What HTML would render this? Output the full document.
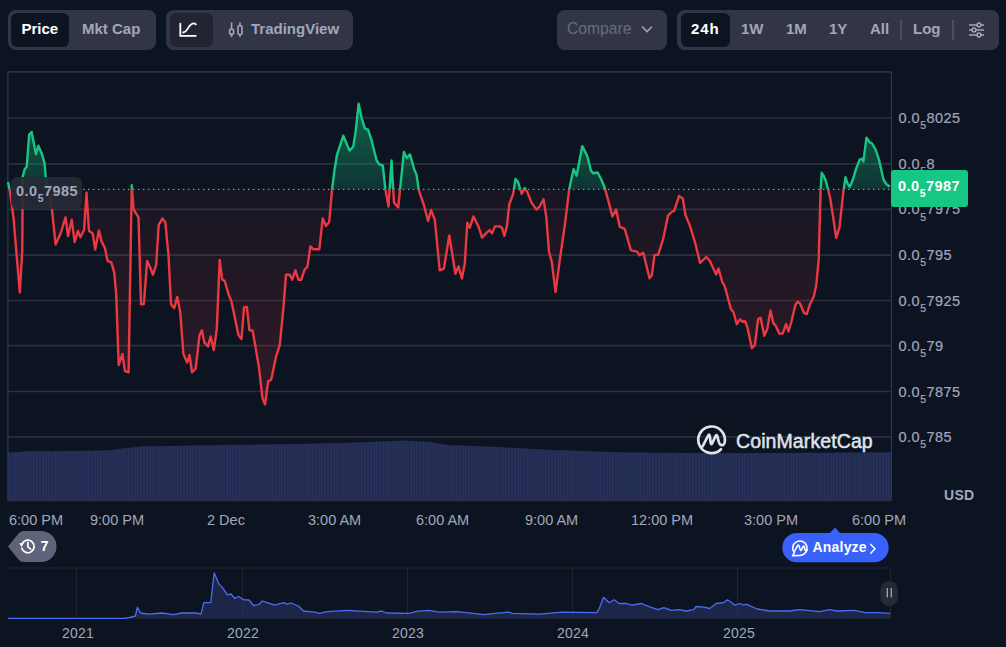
<!DOCTYPE html>
<html><head><meta charset="utf-8">
<style>
*{margin:0;padding:0;box-sizing:border-box}
html,body{width:1006px;height:647px;overflow:hidden;background:#0d1421;font-family:"Liberation Sans",sans-serif}
.abs{position:absolute}
.pill{position:absolute;background:#323546;border-radius:8px}
.act{position:absolute;border-radius:6px}
.bt{position:absolute;font-weight:bold;font-size:15px;line-height:16px;white-space:nowrap}
.ax{position:absolute;font-size:14.5px;line-height:18px;color:#a1a7bb;white-space:nowrap;letter-spacing:0.5px;-webkit-text-stroke:0.2px #a1a7bb}
.ax sub{font-size:10.5px;vertical-align:baseline;position:relative;top:6.3px;letter-spacing:0.4px}
.tl{position:absolute;font-size:14.5px;letter-spacing:0px;line-height:16px;color:#a1a7bb;white-space:nowrap;top:512px}
.yr{position:absolute;font-size:14px;line-height:16px;color:#a1a7bb;white-space:nowrap;top:625px;letter-spacing:0.2px}
svg{position:absolute;left:0;top:0}
</style></head><body>
<svg width="1006" height="647" viewBox="0 0 1006 647">
<defs>
<clipPath id="up"><rect x="0" y="0" width="1006" height="189.4"/></clipPath>
<clipPath id="dn"><rect x="0" y="189.4" width="1006" height="400"/></clipPath>
<linearGradient id="gr" x1="0" y1="189.4" x2="0" y2="500" gradientUnits="userSpaceOnUse">
<stop offset="0" stop-color="#ea3943" stop-opacity="0.05"/><stop offset="1" stop-color="#ea3943" stop-opacity="0.21"/></linearGradient>
<linearGradient id="gg" x1="0" y1="100" x2="0" y2="189.4" gradientUnits="userSpaceOnUse">
<stop offset="0" stop-color="#16c784" stop-opacity="0.45"/><stop offset="1" stop-color="#16c784" stop-opacity="0.18"/></linearGradient>
<clipPath id="volclip"><path d="M8,452.7 L26.8,451.4 L107,450.5 L125,448.3 L143,446.5 L223.6,445.1 L290.7,444.2 L344.4,442.9 L384.6,441.5 L402.5,440.6 L429.3,442 L447.2,445.1 L485.7,446.5 L554.3,450.1 L622.9,452.4 L714.4,453.3 L891,452.4 L891,500 L8,500 Z"/></clipPath>
</defs>
<g fill="none" stroke-width="1.1">
<path d="M7.9,71.9 V500.8 M891.4,71.9 V500.8 M7.9,71.9 H891.4" stroke="#363a4b"/>
<path d="M7.9,500.6 H891.4" stroke="#2a2e3d"/>
<path d="M8,118.0 H891" stroke="#2b2f3f" stroke-width="1.7"/><path d="M8,163.8 H891" stroke="#2b2f3f" stroke-width="1.7"/><path d="M8,209.4 H891" stroke="#2b2f3f" stroke-width="1.7"/><path d="M8,255.2 H891" stroke="#2b2f3f" stroke-width="1.7"/><path d="M8,300.5 H891" stroke="#2b2f3f" stroke-width="1.7"/><path d="M8,345.6 H891" stroke="#2b2f3f" stroke-width="1.7"/><path d="M8,391.5 H891" stroke="#2b2f3f" stroke-width="1.7"/><path d="M8,436.9 H891" stroke="#2b2f3f" stroke-width="1.7"/>
</g>
<path d="M8.0,182.0 L10.0,192.0 L13.5,218.0 L19.8,292.5 L22.3,250.0 L22.7,176.6 L24.7,169.2 L26.7,166.7 L29.2,134.6 L31.6,132.0 L34.1,144.5 L35.9,154.3 L38.3,145.7 L42.0,154.3 L44.5,163.0 L45.7,176.6 L49.5,193.9 L51.9,208.7 L55.6,244.6 L60.6,233.5 L65.5,217.4 L68.0,236.0 L71.7,219.9 L74.7,242.1 L77.9,231.0 L80.4,237.2 L84.1,229.8 L86.5,192.7 L89.0,231.0 L92.7,233.5 L95.2,249.5 L98.9,230.5 L101.4,240.9 L105.0,248.3 L107.6,261.0 L111.3,262.4 L114.2,272.3 L116.2,294.5 L118.7,365.0 L122.4,353.9 L124.9,371.2 L128.6,372.4 L129.8,299.5 L131.8,185.3 L133.5,208.7 L136.0,213.7 L138.5,217.4 L141.0,304.4 L143.9,304.0 L147.1,261.0 L150.0,267.3 L153.0,274.7 L156.2,264.8 L158.7,224.8 L162.4,218.6 L165.3,222.3 L168.5,255.0 L171.0,304.4 L174.2,308.1 L177.2,297.0 L180.2,311.8 L183.4,353.9 L187.1,362.5 L189.6,355.1 L192.0,372.4 L195.7,368.7 L199.5,335.3 L201.9,330.4 L204.4,342.7 L208.1,346.4 L210.6,336.5 L213.8,350.1 L216.8,329.1 L219.7,259.9 L222.2,279.7 L224.7,280.9 L228.6,294.5 L231.6,301.9 L238.5,335.3 L241.5,339.0 L244.0,307.4 L246.9,306.9 L249.4,330.4 L252.6,330.4 L258.8,366.2 L262.5,398.4 L265.0,404.5 L268.2,381.1 L271.2,379.8 L276.1,356.3 L279.8,345.2 L283.5,306.9 L286.0,274.7 L289.7,274.7 L292.2,279.7 L295.4,270.3 L298.4,279.7 L301.3,279.7 L304.5,269.8 L307.4,266.7 L310.4,246.4 L313.6,249.3 L319.3,249.3 L322.7,218.4 L326.0,225.9 L329.2,222.1 L332.1,189.0 L334.6,169.2 L337.1,154.3 L343.3,135.8 L349.5,150.6 L353.2,146.9 L355.6,132.1 L358.6,103.7 L361.8,118.5 L364.8,128.4 L368.0,129.6 L371.7,140.7 L376.6,160.5 L379.1,164.2 L382.8,165.5 L385.3,189.0 L388.5,206.5 L391.5,160.5 L394.0,202.6 L398.2,207.5 L400.1,189.0 L403.9,151.9 L406.8,158.1 L410.0,154.3 L414.2,169.2 L416.7,175.4 L418.7,190.2 L423.6,204.0 L428.1,221.0 L431.1,210.0 L434.8,219.8 L439.7,270.4 L443.9,268.6 L449.3,235.5 L455.4,273.7 L458.5,266.4 L461.9,278.4 L464.8,263.5 L467.3,222.7 L469.8,227.7 L473.5,216.5 L478.4,226.4 L482.1,237.6 L485.9,233.4 L489.6,230.1 L492.0,233.4 L495.0,226.4 L499.5,226.4 L501.9,227.7 L504.4,235.8 L506.9,226.4 L509.3,204.2 L513.1,194.3 L515.5,179.0 L518.0,181.9 L521.7,193.8 L524.7,188.1 L527.2,191.8 L531.6,202.9 L536.5,209.6 L539.5,206.7 L543.5,199.2 L546.4,217.8 L548.9,251.2 L551.9,262.3 L555.5,292.0 L560.0,258.6 L565.0,224.0 L569.2,189.3 L573.6,169.1 L576.6,175.7 L582.3,146.1 L587.2,156.0 L591.0,170.8 L593.4,173.3 L597.6,172.5 L601.3,179.5 L605.0,188.5 L608.7,202.1 L612.4,216.5 L616.1,209.6 L619.8,226.9 L624.7,228.9 L630.9,250.4 L637.1,251.6 L639.6,255.3 L643.3,252.8 L649.5,278.3 L651.9,275.1 L654.4,255.3 L658.1,254.8 L663.1,239.2 L668.0,215.7 L671.7,212.0 L674.2,210.8 L679.1,196.0 L682.8,198.4 L685.3,214.5 L690.3,226.9 L695.2,243.0 L700.1,263.0 L706.2,257.0 L709.9,261.0 L716.1,274.5 L718.5,268.5 L722.3,282.0 L724.8,286.5 L730.9,309.1 L733.4,312.0 L736.8,324.2 L739.9,319.3 L743.0,322.0 L745.0,321.0 L747.5,327.7 L751.9,348.2 L754.9,345.0 L758.1,319.0 L760.6,317.8 L764.3,335.8 L767.3,328.9 L770.5,310.4 L773.4,323.5 L775.4,325.2 L779.6,333.9 L782.8,333.4 L786.1,324.0 L788.5,331.4 L791.5,321.5 L795.2,305.4 L797.7,301.7 L800.1,303.7 L803.9,312.8 L806.8,314.1 L810.0,304.2 L813.7,296.8 L816.2,285.6 L818.7,259.7 L820.6,190.0 L821.7,172.8 L823.8,176.0 L826.0,181.4 L828.2,190.0 L830.3,198.7 L833.6,220.4 L836.2,237.7 L839.6,226.9 L843.3,192.2 L845.5,177.1 L847.6,183.6 L849.8,186.8 L853.0,179.2 L856.3,168.4 L859.5,159.8 L861.7,158.7 L863.4,161.5 L866.5,137.7 L869.3,142.0 L872.1,143.5 L875.8,150.0 L879.0,159.8 L883.4,179.2 L885.9,183.6 L889.8,186.8 L889.8,189.4 L8.0,189.4 Z" fill="url(#gr)" clip-path="url(#dn)"/>
<path d="M8.0,182.0 L10.0,192.0 L13.5,218.0 L19.8,292.5 L22.3,250.0 L22.7,176.6 L24.7,169.2 L26.7,166.7 L29.2,134.6 L31.6,132.0 L34.1,144.5 L35.9,154.3 L38.3,145.7 L42.0,154.3 L44.5,163.0 L45.7,176.6 L49.5,193.9 L51.9,208.7 L55.6,244.6 L60.6,233.5 L65.5,217.4 L68.0,236.0 L71.7,219.9 L74.7,242.1 L77.9,231.0 L80.4,237.2 L84.1,229.8 L86.5,192.7 L89.0,231.0 L92.7,233.5 L95.2,249.5 L98.9,230.5 L101.4,240.9 L105.0,248.3 L107.6,261.0 L111.3,262.4 L114.2,272.3 L116.2,294.5 L118.7,365.0 L122.4,353.9 L124.9,371.2 L128.6,372.4 L129.8,299.5 L131.8,185.3 L133.5,208.7 L136.0,213.7 L138.5,217.4 L141.0,304.4 L143.9,304.0 L147.1,261.0 L150.0,267.3 L153.0,274.7 L156.2,264.8 L158.7,224.8 L162.4,218.6 L165.3,222.3 L168.5,255.0 L171.0,304.4 L174.2,308.1 L177.2,297.0 L180.2,311.8 L183.4,353.9 L187.1,362.5 L189.6,355.1 L192.0,372.4 L195.7,368.7 L199.5,335.3 L201.9,330.4 L204.4,342.7 L208.1,346.4 L210.6,336.5 L213.8,350.1 L216.8,329.1 L219.7,259.9 L222.2,279.7 L224.7,280.9 L228.6,294.5 L231.6,301.9 L238.5,335.3 L241.5,339.0 L244.0,307.4 L246.9,306.9 L249.4,330.4 L252.6,330.4 L258.8,366.2 L262.5,398.4 L265.0,404.5 L268.2,381.1 L271.2,379.8 L276.1,356.3 L279.8,345.2 L283.5,306.9 L286.0,274.7 L289.7,274.7 L292.2,279.7 L295.4,270.3 L298.4,279.7 L301.3,279.7 L304.5,269.8 L307.4,266.7 L310.4,246.4 L313.6,249.3 L319.3,249.3 L322.7,218.4 L326.0,225.9 L329.2,222.1 L332.1,189.0 L334.6,169.2 L337.1,154.3 L343.3,135.8 L349.5,150.6 L353.2,146.9 L355.6,132.1 L358.6,103.7 L361.8,118.5 L364.8,128.4 L368.0,129.6 L371.7,140.7 L376.6,160.5 L379.1,164.2 L382.8,165.5 L385.3,189.0 L388.5,206.5 L391.5,160.5 L394.0,202.6 L398.2,207.5 L400.1,189.0 L403.9,151.9 L406.8,158.1 L410.0,154.3 L414.2,169.2 L416.7,175.4 L418.7,190.2 L423.6,204.0 L428.1,221.0 L431.1,210.0 L434.8,219.8 L439.7,270.4 L443.9,268.6 L449.3,235.5 L455.4,273.7 L458.5,266.4 L461.9,278.4 L464.8,263.5 L467.3,222.7 L469.8,227.7 L473.5,216.5 L478.4,226.4 L482.1,237.6 L485.9,233.4 L489.6,230.1 L492.0,233.4 L495.0,226.4 L499.5,226.4 L501.9,227.7 L504.4,235.8 L506.9,226.4 L509.3,204.2 L513.1,194.3 L515.5,179.0 L518.0,181.9 L521.7,193.8 L524.7,188.1 L527.2,191.8 L531.6,202.9 L536.5,209.6 L539.5,206.7 L543.5,199.2 L546.4,217.8 L548.9,251.2 L551.9,262.3 L555.5,292.0 L560.0,258.6 L565.0,224.0 L569.2,189.3 L573.6,169.1 L576.6,175.7 L582.3,146.1 L587.2,156.0 L591.0,170.8 L593.4,173.3 L597.6,172.5 L601.3,179.5 L605.0,188.5 L608.7,202.1 L612.4,216.5 L616.1,209.6 L619.8,226.9 L624.7,228.9 L630.9,250.4 L637.1,251.6 L639.6,255.3 L643.3,252.8 L649.5,278.3 L651.9,275.1 L654.4,255.3 L658.1,254.8 L663.1,239.2 L668.0,215.7 L671.7,212.0 L674.2,210.8 L679.1,196.0 L682.8,198.4 L685.3,214.5 L690.3,226.9 L695.2,243.0 L700.1,263.0 L706.2,257.0 L709.9,261.0 L716.1,274.5 L718.5,268.5 L722.3,282.0 L724.8,286.5 L730.9,309.1 L733.4,312.0 L736.8,324.2 L739.9,319.3 L743.0,322.0 L745.0,321.0 L747.5,327.7 L751.9,348.2 L754.9,345.0 L758.1,319.0 L760.6,317.8 L764.3,335.8 L767.3,328.9 L770.5,310.4 L773.4,323.5 L775.4,325.2 L779.6,333.9 L782.8,333.4 L786.1,324.0 L788.5,331.4 L791.5,321.5 L795.2,305.4 L797.7,301.7 L800.1,303.7 L803.9,312.8 L806.8,314.1 L810.0,304.2 L813.7,296.8 L816.2,285.6 L818.7,259.7 L820.6,190.0 L821.7,172.8 L823.8,176.0 L826.0,181.4 L828.2,190.0 L830.3,198.7 L833.6,220.4 L836.2,237.7 L839.6,226.9 L843.3,192.2 L845.5,177.1 L847.6,183.6 L849.8,186.8 L853.0,179.2 L856.3,168.4 L859.5,159.8 L861.7,158.7 L863.4,161.5 L866.5,137.7 L869.3,142.0 L872.1,143.5 L875.8,150.0 L879.0,159.8 L883.4,179.2 L885.9,183.6 L889.8,186.8 L889.8,189.4 L8.0,189.4 Z" fill="url(#gg)" clip-path="url(#up)"/>
<rect x="8" y="440" width="883" height="60" fill="#20274a" clip-path="url(#volclip)"/><g fill="#273058"><rect x="8.00" y="452.6" width="2.37" height="47.4"/><rect x="11.07" y="452.4" width="2.37" height="47.6"/><rect x="14.13" y="452.2" width="2.37" height="47.8"/><rect x="17.20" y="452.0" width="2.37" height="48.0"/><rect x="20.26" y="451.7" width="2.37" height="48.3"/><rect x="23.33" y="451.5" width="2.37" height="48.5"/><rect x="26.40" y="451.4" width="2.37" height="48.6"/><rect x="29.46" y="451.4" width="2.37" height="48.6"/><rect x="32.53" y="451.3" width="2.37" height="48.7"/><rect x="35.59" y="451.3" width="2.37" height="48.7"/><rect x="38.66" y="451.2" width="2.37" height="48.8"/><rect x="41.73" y="451.2" width="2.37" height="48.8"/><rect x="44.79" y="451.2" width="2.37" height="48.8"/><rect x="47.86" y="451.1" width="2.37" height="48.9"/><rect x="50.92" y="451.1" width="2.37" height="48.9"/><rect x="53.99" y="451.1" width="2.37" height="48.9"/><rect x="57.06" y="451.0" width="2.37" height="49.0"/><rect x="60.12" y="451.0" width="2.37" height="49.0"/><rect x="63.19" y="451.0" width="2.37" height="49.0"/><rect x="66.25" y="450.9" width="2.37" height="49.1"/><rect x="69.32" y="450.9" width="2.37" height="49.1"/><rect x="72.39" y="450.9" width="2.37" height="49.1"/><rect x="75.45" y="450.8" width="2.37" height="49.2"/><rect x="78.52" y="450.8" width="2.37" height="49.2"/><rect x="81.58" y="450.8" width="2.37" height="49.2"/><rect x="84.65" y="450.7" width="2.37" height="49.3"/><rect x="87.72" y="450.7" width="2.37" height="49.3"/><rect x="90.78" y="450.7" width="2.37" height="49.3"/><rect x="93.85" y="450.6" width="2.37" height="49.4"/><rect x="96.91" y="450.6" width="2.37" height="49.4"/><rect x="99.98" y="450.6" width="2.37" height="49.4"/><rect x="103.05" y="450.5" width="2.37" height="49.5"/><rect x="106.11" y="450.4" width="2.37" height="49.6"/><rect x="109.18" y="450.0" width="2.37" height="50.0"/><rect x="112.24" y="449.7" width="2.37" height="50.3"/><rect x="115.31" y="449.3" width="2.37" height="50.7"/><rect x="118.38" y="448.9" width="2.37" height="51.1"/><rect x="121.44" y="448.5" width="2.37" height="51.5"/><rect x="124.51" y="448.2" width="2.37" height="51.8"/><rect x="127.57" y="447.9" width="2.37" height="52.1"/><rect x="130.64" y="447.6" width="2.37" height="52.4"/><rect x="133.70" y="447.3" width="2.37" height="52.7"/><rect x="136.77" y="447.0" width="2.37" height="53.0"/><rect x="139.84" y="446.7" width="2.37" height="53.3"/><rect x="142.90" y="446.5" width="2.37" height="53.5"/><rect x="145.97" y="446.4" width="2.37" height="53.6"/><rect x="149.03" y="446.4" width="2.37" height="53.6"/><rect x="152.10" y="446.3" width="2.37" height="53.7"/><rect x="155.17" y="446.3" width="2.37" height="53.7"/><rect x="158.23" y="446.2" width="2.37" height="53.8"/><rect x="161.30" y="446.2" width="2.37" height="53.8"/><rect x="164.36" y="446.1" width="2.37" height="53.9"/><rect x="167.43" y="446.0" width="2.37" height="54.0"/><rect x="170.50" y="446.0" width="2.37" height="54.0"/><rect x="173.56" y="445.9" width="2.37" height="54.1"/><rect x="176.63" y="445.9" width="2.37" height="54.1"/><rect x="179.69" y="445.8" width="2.37" height="54.2"/><rect x="182.76" y="445.8" width="2.37" height="54.2"/><rect x="185.83" y="445.7" width="2.37" height="54.3"/><rect x="188.89" y="445.7" width="2.37" height="54.3"/><rect x="191.96" y="445.6" width="2.37" height="54.4"/><rect x="195.02" y="445.6" width="2.37" height="54.4"/><rect x="198.09" y="445.5" width="2.37" height="54.5"/><rect x="201.16" y="445.5" width="2.37" height="54.5"/><rect x="204.22" y="445.4" width="2.37" height="54.6"/><rect x="207.29" y="445.4" width="2.37" height="54.6"/><rect x="210.35" y="445.3" width="2.37" height="54.7"/><rect x="213.42" y="445.3" width="2.37" height="54.7"/><rect x="216.49" y="445.2" width="2.37" height="54.8"/><rect x="219.55" y="445.1" width="2.37" height="54.9"/><rect x="222.62" y="445.1" width="2.37" height="54.9"/><rect x="225.68" y="445.1" width="2.37" height="54.9"/><rect x="228.75" y="445.0" width="2.37" height="55.0"/><rect x="231.82" y="445.0" width="2.37" height="55.0"/><rect x="234.88" y="444.9" width="2.37" height="55.1"/><rect x="237.95" y="444.9" width="2.37" height="55.1"/><rect x="241.01" y="444.8" width="2.37" height="55.2"/><rect x="244.08" y="444.8" width="2.37" height="55.2"/><rect x="247.15" y="444.8" width="2.37" height="55.2"/><rect x="250.21" y="444.7" width="2.37" height="55.3"/><rect x="253.28" y="444.7" width="2.37" height="55.3"/><rect x="256.34" y="444.6" width="2.37" height="55.4"/><rect x="259.41" y="444.6" width="2.37" height="55.4"/><rect x="262.48" y="444.6" width="2.37" height="55.4"/><rect x="265.54" y="444.5" width="2.37" height="55.5"/><rect x="268.61" y="444.5" width="2.37" height="55.5"/><rect x="271.67" y="444.4" width="2.37" height="55.6"/><rect x="274.74" y="444.4" width="2.37" height="55.6"/><rect x="277.81" y="444.4" width="2.37" height="55.6"/><rect x="280.87" y="444.3" width="2.37" height="55.7"/><rect x="283.94" y="444.3" width="2.37" height="55.7"/><rect x="287.00" y="444.2" width="2.37" height="55.8"/><rect x="290.07" y="444.2" width="2.37" height="55.8"/><rect x="293.14" y="444.1" width="2.37" height="55.9"/><rect x="296.20" y="444.0" width="2.37" height="56.0"/><rect x="299.27" y="444.0" width="2.37" height="56.0"/><rect x="302.33" y="443.9" width="2.37" height="56.1"/><rect x="305.40" y="443.8" width="2.37" height="56.2"/><rect x="308.47" y="443.7" width="2.37" height="56.3"/><rect x="311.53" y="443.7" width="2.37" height="56.3"/><rect x="314.60" y="443.6" width="2.37" height="56.4"/><rect x="317.66" y="443.5" width="2.37" height="56.5"/><rect x="320.73" y="443.4" width="2.37" height="56.6"/><rect x="323.80" y="443.4" width="2.37" height="56.6"/><rect x="326.86" y="443.3" width="2.37" height="56.7"/><rect x="329.93" y="443.2" width="2.37" height="56.8"/><rect x="332.99" y="443.1" width="2.37" height="56.9"/><rect x="336.06" y="443.1" width="2.37" height="56.9"/><rect x="339.12" y="443.0" width="2.37" height="57.0"/><rect x="342.19" y="442.9" width="2.37" height="57.1"/><rect x="345.26" y="442.8" width="2.37" height="57.2"/><rect x="348.32" y="442.7" width="2.37" height="57.3"/><rect x="351.39" y="442.6" width="2.37" height="57.4"/><rect x="354.45" y="442.5" width="2.37" height="57.5"/><rect x="357.52" y="442.4" width="2.37" height="57.6"/><rect x="360.59" y="442.3" width="2.37" height="57.7"/><rect x="363.65" y="442.2" width="2.37" height="57.8"/><rect x="366.72" y="442.1" width="2.37" height="57.9"/><rect x="369.78" y="442.0" width="2.37" height="58.0"/><rect x="372.85" y="441.9" width="2.37" height="58.1"/><rect x="375.92" y="441.7" width="2.37" height="58.3"/><rect x="378.98" y="441.6" width="2.37" height="58.4"/><rect x="382.05" y="441.5" width="2.37" height="58.5"/><rect x="385.11" y="441.4" width="2.37" height="58.6"/><rect x="388.18" y="441.2" width="2.37" height="58.8"/><rect x="391.25" y="441.1" width="2.37" height="58.9"/><rect x="394.31" y="440.9" width="2.37" height="59.1"/><rect x="397.38" y="440.8" width="2.37" height="59.2"/><rect x="400.44" y="440.6" width="2.37" height="59.4"/><rect x="403.51" y="440.7" width="2.37" height="59.3"/><rect x="406.58" y="440.9" width="2.37" height="59.1"/><rect x="409.64" y="441.1" width="2.37" height="58.9"/><rect x="412.71" y="441.2" width="2.37" height="58.8"/><rect x="415.77" y="441.4" width="2.37" height="58.6"/><rect x="418.84" y="441.5" width="2.37" height="58.5"/><rect x="421.91" y="441.7" width="2.37" height="58.3"/><rect x="424.97" y="441.9" width="2.37" height="58.1"/><rect x="428.04" y="442.0" width="2.37" height="58.0"/><rect x="431.10" y="442.6" width="2.37" height="57.4"/><rect x="434.17" y="443.1" width="2.37" height="56.9"/><rect x="437.24" y="443.6" width="2.37" height="56.4"/><rect x="440.30" y="444.2" width="2.37" height="55.8"/><rect x="443.37" y="444.7" width="2.37" height="55.3"/><rect x="446.43" y="445.1" width="2.37" height="54.9"/><rect x="449.50" y="445.2" width="2.37" height="54.8"/><rect x="452.57" y="445.4" width="2.37" height="54.6"/><rect x="455.63" y="445.5" width="2.37" height="54.5"/><rect x="458.70" y="445.6" width="2.37" height="54.4"/><rect x="461.76" y="445.7" width="2.37" height="54.3"/><rect x="464.83" y="445.8" width="2.37" height="54.2"/><rect x="467.90" y="445.9" width="2.37" height="54.1"/><rect x="470.96" y="446.0" width="2.37" height="54.0"/><rect x="474.03" y="446.1" width="2.37" height="53.9"/><rect x="477.09" y="446.2" width="2.37" height="53.8"/><rect x="480.16" y="446.4" width="2.37" height="53.6"/><rect x="483.23" y="446.5" width="2.37" height="53.5"/><rect x="486.29" y="446.6" width="2.37" height="53.4"/><rect x="489.36" y="446.8" width="2.37" height="53.2"/><rect x="492.42" y="446.9" width="2.37" height="53.1"/><rect x="495.49" y="447.1" width="2.37" height="52.9"/><rect x="498.56" y="447.3" width="2.37" height="52.7"/><rect x="501.62" y="447.4" width="2.37" height="52.6"/><rect x="504.69" y="447.6" width="2.37" height="52.4"/><rect x="507.75" y="447.7" width="2.37" height="52.3"/><rect x="510.82" y="447.9" width="2.37" height="52.1"/><rect x="513.89" y="448.1" width="2.37" height="51.9"/><rect x="516.95" y="448.2" width="2.37" height="51.8"/><rect x="520.02" y="448.4" width="2.37" height="51.6"/><rect x="523.08" y="448.5" width="2.37" height="51.5"/><rect x="526.15" y="448.7" width="2.37" height="51.3"/><rect x="529.22" y="448.9" width="2.37" height="51.1"/><rect x="532.28" y="449.0" width="2.37" height="51.0"/><rect x="535.35" y="449.2" width="2.37" height="50.8"/><rect x="538.41" y="449.3" width="2.37" height="50.7"/><rect x="541.48" y="449.5" width="2.37" height="50.5"/><rect x="544.55" y="449.7" width="2.37" height="50.3"/><rect x="547.61" y="449.8" width="2.37" height="50.2"/><rect x="550.68" y="450.0" width="2.37" height="50.0"/><rect x="553.74" y="450.1" width="2.37" height="49.9"/><rect x="556.81" y="450.2" width="2.37" height="49.8"/><rect x="559.88" y="450.3" width="2.37" height="49.7"/><rect x="562.94" y="450.4" width="2.37" height="49.6"/><rect x="566.01" y="450.5" width="2.37" height="49.5"/><rect x="569.07" y="450.6" width="2.37" height="49.4"/><rect x="572.14" y="450.7" width="2.37" height="49.3"/><rect x="575.20" y="450.9" width="2.37" height="49.1"/><rect x="578.27" y="451.0" width="2.37" height="49.0"/><rect x="581.34" y="451.1" width="2.37" height="48.9"/><rect x="584.40" y="451.2" width="2.37" height="48.8"/><rect x="587.47" y="451.3" width="2.37" height="48.7"/><rect x="590.53" y="451.4" width="2.37" height="48.6"/><rect x="593.60" y="451.5" width="2.37" height="48.5"/><rect x="596.67" y="451.6" width="2.37" height="48.4"/><rect x="599.73" y="451.7" width="2.37" height="48.3"/><rect x="602.80" y="451.8" width="2.37" height="48.2"/><rect x="605.86" y="451.9" width="2.37" height="48.1"/><rect x="608.93" y="452.0" width="2.37" height="48.0"/><rect x="612.00" y="452.1" width="2.37" height="47.9"/><rect x="615.06" y="452.2" width="2.37" height="47.8"/><rect x="618.13" y="452.3" width="2.37" height="47.7"/><rect x="621.19" y="452.4" width="2.37" height="47.6"/><rect x="624.26" y="452.4" width="2.37" height="47.6"/><rect x="627.33" y="452.5" width="2.37" height="47.5"/><rect x="630.39" y="452.5" width="2.37" height="47.5"/><rect x="633.46" y="452.5" width="2.37" height="47.5"/><rect x="636.52" y="452.5" width="2.37" height="47.5"/><rect x="639.59" y="452.6" width="2.37" height="47.4"/><rect x="642.66" y="452.6" width="2.37" height="47.4"/><rect x="645.72" y="452.6" width="2.37" height="47.4"/><rect x="648.79" y="452.7" width="2.37" height="47.3"/><rect x="651.85" y="452.7" width="2.37" height="47.3"/><rect x="654.92" y="452.7" width="2.37" height="47.3"/><rect x="657.99" y="452.8" width="2.37" height="47.2"/><rect x="661.05" y="452.8" width="2.37" height="47.2"/><rect x="664.12" y="452.8" width="2.37" height="47.2"/><rect x="667.18" y="452.9" width="2.37" height="47.1"/><rect x="670.25" y="452.9" width="2.37" height="47.1"/><rect x="673.32" y="452.9" width="2.37" height="47.1"/><rect x="676.38" y="452.9" width="2.37" height="47.1"/><rect x="679.45" y="453.0" width="2.37" height="47.0"/><rect x="682.51" y="453.0" width="2.37" height="47.0"/><rect x="685.58" y="453.0" width="2.37" height="47.0"/><rect x="688.65" y="453.1" width="2.37" height="46.9"/><rect x="691.71" y="453.1" width="2.37" height="46.9"/><rect x="694.78" y="453.1" width="2.37" height="46.9"/><rect x="697.84" y="453.2" width="2.37" height="46.8"/><rect x="700.91" y="453.2" width="2.37" height="46.8"/><rect x="703.98" y="453.2" width="2.37" height="46.8"/><rect x="707.04" y="453.2" width="2.37" height="46.8"/><rect x="710.11" y="453.3" width="2.37" height="46.7"/><rect x="713.17" y="453.3" width="2.37" height="46.7"/><rect x="716.24" y="453.3" width="2.37" height="46.7"/><rect x="719.31" y="453.3" width="2.37" height="46.7"/><rect x="722.37" y="453.3" width="2.37" height="46.7"/><rect x="725.44" y="453.2" width="2.37" height="46.8"/><rect x="728.50" y="453.2" width="2.37" height="46.8"/><rect x="731.57" y="453.2" width="2.37" height="46.8"/><rect x="734.64" y="453.2" width="2.37" height="46.8"/><rect x="737.70" y="453.2" width="2.37" height="46.8"/><rect x="740.77" y="453.2" width="2.37" height="46.8"/><rect x="743.83" y="453.1" width="2.37" height="46.9"/><rect x="746.90" y="453.1" width="2.37" height="46.9"/><rect x="749.97" y="453.1" width="2.37" height="46.9"/><rect x="753.03" y="453.1" width="2.37" height="46.9"/><rect x="756.10" y="453.1" width="2.37" height="46.9"/><rect x="759.16" y="453.1" width="2.37" height="46.9"/><rect x="762.23" y="453.0" width="2.37" height="47.0"/><rect x="765.30" y="453.0" width="2.37" height="47.0"/><rect x="768.36" y="453.0" width="2.37" height="47.0"/><rect x="771.43" y="453.0" width="2.37" height="47.0"/><rect x="774.49" y="453.0" width="2.37" height="47.0"/><rect x="777.56" y="453.0" width="2.37" height="47.0"/><rect x="780.62" y="453.0" width="2.37" height="47.0"/><rect x="783.69" y="452.9" width="2.37" height="47.1"/><rect x="786.76" y="452.9" width="2.37" height="47.1"/><rect x="789.82" y="452.9" width="2.37" height="47.1"/><rect x="792.89" y="452.9" width="2.37" height="47.1"/><rect x="795.95" y="452.9" width="2.37" height="47.1"/><rect x="799.02" y="452.9" width="2.37" height="47.1"/><rect x="802.09" y="452.8" width="2.37" height="47.2"/><rect x="805.15" y="452.8" width="2.37" height="47.2"/><rect x="808.22" y="452.8" width="2.37" height="47.2"/><rect x="811.28" y="452.8" width="2.37" height="47.2"/><rect x="814.35" y="452.8" width="2.37" height="47.2"/><rect x="817.42" y="452.8" width="2.37" height="47.2"/><rect x="820.48" y="452.8" width="2.37" height="47.2"/><rect x="823.55" y="452.7" width="2.37" height="47.3"/><rect x="826.61" y="452.7" width="2.37" height="47.3"/><rect x="829.68" y="452.7" width="2.37" height="47.3"/><rect x="832.75" y="452.7" width="2.37" height="47.3"/><rect x="835.81" y="452.7" width="2.37" height="47.3"/><rect x="838.88" y="452.7" width="2.37" height="47.3"/><rect x="841.94" y="452.6" width="2.37" height="47.4"/><rect x="845.01" y="452.6" width="2.37" height="47.4"/><rect x="848.08" y="452.6" width="2.37" height="47.4"/><rect x="851.14" y="452.6" width="2.37" height="47.4"/><rect x="854.21" y="452.6" width="2.37" height="47.4"/><rect x="857.27" y="452.6" width="2.37" height="47.4"/><rect x="860.34" y="452.5" width="2.37" height="47.5"/><rect x="863.41" y="452.5" width="2.37" height="47.5"/><rect x="866.47" y="452.5" width="2.37" height="47.5"/><rect x="869.54" y="452.5" width="2.37" height="47.5"/><rect x="872.60" y="452.5" width="2.37" height="47.5"/><rect x="875.67" y="452.5" width="2.37" height="47.5"/><rect x="878.74" y="452.5" width="2.37" height="47.5"/><rect x="881.80" y="452.4" width="2.37" height="47.6"/><rect x="884.87" y="452.4" width="2.37" height="47.6"/><rect x="887.93" y="452.4" width="2.37" height="47.6"/></g>
<g fill="#a1a7bb"><rect x="13.1" y="188.8" width="1.2" height="1.2"/><rect x="18.1" y="188.8" width="1.2" height="1.2"/><rect x="23.1" y="188.8" width="1.2" height="1.2"/><rect x="28.1" y="188.8" width="1.2" height="1.2"/><rect x="33.1" y="188.8" width="1.2" height="1.2"/><rect x="38.1" y="188.8" width="1.2" height="1.2"/><rect x="43.1" y="188.8" width="1.2" height="1.2"/><rect x="48.1" y="188.8" width="1.2" height="1.2"/><rect x="53.1" y="188.8" width="1.2" height="1.2"/><rect x="58.1" y="188.8" width="1.2" height="1.2"/><rect x="63.1" y="188.8" width="1.2" height="1.2"/><rect x="68.1" y="188.8" width="1.2" height="1.2"/><rect x="73.1" y="188.8" width="1.2" height="1.2"/><rect x="78.1" y="188.8" width="1.2" height="1.2"/><rect x="83.1" y="188.8" width="1.2" height="1.2"/><rect x="88.1" y="188.8" width="1.2" height="1.2"/><rect x="93.1" y="188.8" width="1.2" height="1.2"/><rect x="98.1" y="188.8" width="1.2" height="1.2"/><rect x="103.1" y="188.8" width="1.2" height="1.2"/><rect x="108.1" y="188.8" width="1.2" height="1.2"/><rect x="113.1" y="188.8" width="1.2" height="1.2"/><rect x="118.1" y="188.8" width="1.2" height="1.2"/><rect x="123.1" y="188.8" width="1.2" height="1.2"/><rect x="128.1" y="188.8" width="1.2" height="1.2"/><rect x="133.1" y="188.8" width="1.2" height="1.2"/><rect x="138.1" y="188.8" width="1.2" height="1.2"/><rect x="143.1" y="188.8" width="1.2" height="1.2"/><rect x="148.1" y="188.8" width="1.2" height="1.2"/><rect x="153.1" y="188.8" width="1.2" height="1.2"/><rect x="158.1" y="188.8" width="1.2" height="1.2"/><rect x="163.1" y="188.8" width="1.2" height="1.2"/><rect x="168.1" y="188.8" width="1.2" height="1.2"/><rect x="173.1" y="188.8" width="1.2" height="1.2"/><rect x="178.1" y="188.8" width="1.2" height="1.2"/><rect x="183.1" y="188.8" width="1.2" height="1.2"/><rect x="188.1" y="188.8" width="1.2" height="1.2"/><rect x="193.1" y="188.8" width="1.2" height="1.2"/><rect x="198.1" y="188.8" width="1.2" height="1.2"/><rect x="203.1" y="188.8" width="1.2" height="1.2"/><rect x="208.1" y="188.8" width="1.2" height="1.2"/><rect x="213.1" y="188.8" width="1.2" height="1.2"/><rect x="218.1" y="188.8" width="1.2" height="1.2"/><rect x="223.1" y="188.8" width="1.2" height="1.2"/><rect x="228.1" y="188.8" width="1.2" height="1.2"/><rect x="233.1" y="188.8" width="1.2" height="1.2"/><rect x="238.1" y="188.8" width="1.2" height="1.2"/><rect x="243.1" y="188.8" width="1.2" height="1.2"/><rect x="248.1" y="188.8" width="1.2" height="1.2"/><rect x="253.1" y="188.8" width="1.2" height="1.2"/><rect x="258.1" y="188.8" width="1.2" height="1.2"/><rect x="263.1" y="188.8" width="1.2" height="1.2"/><rect x="268.1" y="188.8" width="1.2" height="1.2"/><rect x="273.1" y="188.8" width="1.2" height="1.2"/><rect x="278.1" y="188.8" width="1.2" height="1.2"/><rect x="283.1" y="188.8" width="1.2" height="1.2"/><rect x="288.1" y="188.8" width="1.2" height="1.2"/><rect x="293.1" y="188.8" width="1.2" height="1.2"/><rect x="298.1" y="188.8" width="1.2" height="1.2"/><rect x="303.1" y="188.8" width="1.2" height="1.2"/><rect x="308.1" y="188.8" width="1.2" height="1.2"/><rect x="313.1" y="188.8" width="1.2" height="1.2"/><rect x="318.1" y="188.8" width="1.2" height="1.2"/><rect x="323.1" y="188.8" width="1.2" height="1.2"/><rect x="328.1" y="188.8" width="1.2" height="1.2"/><rect x="333.1" y="188.8" width="1.2" height="1.2"/><rect x="338.1" y="188.8" width="1.2" height="1.2"/><rect x="343.1" y="188.8" width="1.2" height="1.2"/><rect x="348.1" y="188.8" width="1.2" height="1.2"/><rect x="353.1" y="188.8" width="1.2" height="1.2"/><rect x="358.1" y="188.8" width="1.2" height="1.2"/><rect x="363.1" y="188.8" width="1.2" height="1.2"/><rect x="368.1" y="188.8" width="1.2" height="1.2"/><rect x="373.1" y="188.8" width="1.2" height="1.2"/><rect x="378.1" y="188.8" width="1.2" height="1.2"/><rect x="383.1" y="188.8" width="1.2" height="1.2"/><rect x="388.1" y="188.8" width="1.2" height="1.2"/><rect x="393.1" y="188.8" width="1.2" height="1.2"/><rect x="398.1" y="188.8" width="1.2" height="1.2"/><rect x="403.1" y="188.8" width="1.2" height="1.2"/><rect x="408.1" y="188.8" width="1.2" height="1.2"/><rect x="413.1" y="188.8" width="1.2" height="1.2"/><rect x="418.1" y="188.8" width="1.2" height="1.2"/><rect x="423.1" y="188.8" width="1.2" height="1.2"/><rect x="428.1" y="188.8" width="1.2" height="1.2"/><rect x="433.1" y="188.8" width="1.2" height="1.2"/><rect x="438.1" y="188.8" width="1.2" height="1.2"/><rect x="443.1" y="188.8" width="1.2" height="1.2"/><rect x="448.1" y="188.8" width="1.2" height="1.2"/><rect x="453.1" y="188.8" width="1.2" height="1.2"/><rect x="458.1" y="188.8" width="1.2" height="1.2"/><rect x="463.1" y="188.8" width="1.2" height="1.2"/><rect x="468.1" y="188.8" width="1.2" height="1.2"/><rect x="473.1" y="188.8" width="1.2" height="1.2"/><rect x="478.1" y="188.8" width="1.2" height="1.2"/><rect x="483.1" y="188.8" width="1.2" height="1.2"/><rect x="488.1" y="188.8" width="1.2" height="1.2"/><rect x="493.1" y="188.8" width="1.2" height="1.2"/><rect x="498.1" y="188.8" width="1.2" height="1.2"/><rect x="503.1" y="188.8" width="1.2" height="1.2"/><rect x="508.1" y="188.8" width="1.2" height="1.2"/><rect x="513.1" y="188.8" width="1.2" height="1.2"/><rect x="518.1" y="188.8" width="1.2" height="1.2"/><rect x="523.1" y="188.8" width="1.2" height="1.2"/><rect x="528.1" y="188.8" width="1.2" height="1.2"/><rect x="533.1" y="188.8" width="1.2" height="1.2"/><rect x="538.1" y="188.8" width="1.2" height="1.2"/><rect x="543.1" y="188.8" width="1.2" height="1.2"/><rect x="548.1" y="188.8" width="1.2" height="1.2"/><rect x="553.1" y="188.8" width="1.2" height="1.2"/><rect x="558.1" y="188.8" width="1.2" height="1.2"/><rect x="563.1" y="188.8" width="1.2" height="1.2"/><rect x="568.1" y="188.8" width="1.2" height="1.2"/><rect x="573.1" y="188.8" width="1.2" height="1.2"/><rect x="578.1" y="188.8" width="1.2" height="1.2"/><rect x="583.1" y="188.8" width="1.2" height="1.2"/><rect x="588.1" y="188.8" width="1.2" height="1.2"/><rect x="593.1" y="188.8" width="1.2" height="1.2"/><rect x="598.1" y="188.8" width="1.2" height="1.2"/><rect x="603.1" y="188.8" width="1.2" height="1.2"/><rect x="608.1" y="188.8" width="1.2" height="1.2"/><rect x="613.1" y="188.8" width="1.2" height="1.2"/><rect x="618.1" y="188.8" width="1.2" height="1.2"/><rect x="623.1" y="188.8" width="1.2" height="1.2"/><rect x="628.1" y="188.8" width="1.2" height="1.2"/><rect x="633.1" y="188.8" width="1.2" height="1.2"/><rect x="638.1" y="188.8" width="1.2" height="1.2"/><rect x="643.1" y="188.8" width="1.2" height="1.2"/><rect x="648.1" y="188.8" width="1.2" height="1.2"/><rect x="653.1" y="188.8" width="1.2" height="1.2"/><rect x="658.1" y="188.8" width="1.2" height="1.2"/><rect x="663.1" y="188.8" width="1.2" height="1.2"/><rect x="668.1" y="188.8" width="1.2" height="1.2"/><rect x="673.1" y="188.8" width="1.2" height="1.2"/><rect x="678.1" y="188.8" width="1.2" height="1.2"/><rect x="683.1" y="188.8" width="1.2" height="1.2"/><rect x="688.1" y="188.8" width="1.2" height="1.2"/><rect x="693.1" y="188.8" width="1.2" height="1.2"/><rect x="698.1" y="188.8" width="1.2" height="1.2"/><rect x="703.1" y="188.8" width="1.2" height="1.2"/><rect x="708.1" y="188.8" width="1.2" height="1.2"/><rect x="713.1" y="188.8" width="1.2" height="1.2"/><rect x="718.1" y="188.8" width="1.2" height="1.2"/><rect x="723.1" y="188.8" width="1.2" height="1.2"/><rect x="728.1" y="188.8" width="1.2" height="1.2"/><rect x="733.1" y="188.8" width="1.2" height="1.2"/><rect x="738.1" y="188.8" width="1.2" height="1.2"/><rect x="743.1" y="188.8" width="1.2" height="1.2"/><rect x="748.1" y="188.8" width="1.2" height="1.2"/><rect x="753.1" y="188.8" width="1.2" height="1.2"/><rect x="758.1" y="188.8" width="1.2" height="1.2"/><rect x="763.1" y="188.8" width="1.2" height="1.2"/><rect x="768.1" y="188.8" width="1.2" height="1.2"/><rect x="773.1" y="188.8" width="1.2" height="1.2"/><rect x="778.1" y="188.8" width="1.2" height="1.2"/><rect x="783.1" y="188.8" width="1.2" height="1.2"/><rect x="788.1" y="188.8" width="1.2" height="1.2"/><rect x="793.1" y="188.8" width="1.2" height="1.2"/><rect x="798.1" y="188.8" width="1.2" height="1.2"/><rect x="803.1" y="188.8" width="1.2" height="1.2"/><rect x="808.1" y="188.8" width="1.2" height="1.2"/><rect x="813.1" y="188.8" width="1.2" height="1.2"/><rect x="818.1" y="188.8" width="1.2" height="1.2"/><rect x="823.1" y="188.8" width="1.2" height="1.2"/><rect x="828.1" y="188.8" width="1.2" height="1.2"/><rect x="833.1" y="188.8" width="1.2" height="1.2"/><rect x="838.1" y="188.8" width="1.2" height="1.2"/><rect x="843.1" y="188.8" width="1.2" height="1.2"/><rect x="848.1" y="188.8" width="1.2" height="1.2"/><rect x="853.1" y="188.8" width="1.2" height="1.2"/><rect x="858.1" y="188.8" width="1.2" height="1.2"/><rect x="863.1" y="188.8" width="1.2" height="1.2"/><rect x="868.1" y="188.8" width="1.2" height="1.2"/><rect x="873.1" y="188.8" width="1.2" height="1.2"/><rect x="878.1" y="188.8" width="1.2" height="1.2"/><rect x="883.1" y="188.8" width="1.2" height="1.2"/><rect x="888.1" y="188.8" width="1.2" height="1.2"/></g>
<path d="M8.0,182.0 L10.0,192.0 L13.5,218.0 L19.8,292.5 L22.3,250.0 L22.7,176.6 L24.7,169.2 L26.7,166.7 L29.2,134.6 L31.6,132.0 L34.1,144.5 L35.9,154.3 L38.3,145.7 L42.0,154.3 L44.5,163.0 L45.7,176.6 L49.5,193.9 L51.9,208.7 L55.6,244.6 L60.6,233.5 L65.5,217.4 L68.0,236.0 L71.7,219.9 L74.7,242.1 L77.9,231.0 L80.4,237.2 L84.1,229.8 L86.5,192.7 L89.0,231.0 L92.7,233.5 L95.2,249.5 L98.9,230.5 L101.4,240.9 L105.0,248.3 L107.6,261.0 L111.3,262.4 L114.2,272.3 L116.2,294.5 L118.7,365.0 L122.4,353.9 L124.9,371.2 L128.6,372.4 L129.8,299.5 L131.8,185.3 L133.5,208.7 L136.0,213.7 L138.5,217.4 L141.0,304.4 L143.9,304.0 L147.1,261.0 L150.0,267.3 L153.0,274.7 L156.2,264.8 L158.7,224.8 L162.4,218.6 L165.3,222.3 L168.5,255.0 L171.0,304.4 L174.2,308.1 L177.2,297.0 L180.2,311.8 L183.4,353.9 L187.1,362.5 L189.6,355.1 L192.0,372.4 L195.7,368.7 L199.5,335.3 L201.9,330.4 L204.4,342.7 L208.1,346.4 L210.6,336.5 L213.8,350.1 L216.8,329.1 L219.7,259.9 L222.2,279.7 L224.7,280.9 L228.6,294.5 L231.6,301.9 L238.5,335.3 L241.5,339.0 L244.0,307.4 L246.9,306.9 L249.4,330.4 L252.6,330.4 L258.8,366.2 L262.5,398.4 L265.0,404.5 L268.2,381.1 L271.2,379.8 L276.1,356.3 L279.8,345.2 L283.5,306.9 L286.0,274.7 L289.7,274.7 L292.2,279.7 L295.4,270.3 L298.4,279.7 L301.3,279.7 L304.5,269.8 L307.4,266.7 L310.4,246.4 L313.6,249.3 L319.3,249.3 L322.7,218.4 L326.0,225.9 L329.2,222.1 L332.1,189.0 L334.6,169.2 L337.1,154.3 L343.3,135.8 L349.5,150.6 L353.2,146.9 L355.6,132.1 L358.6,103.7 L361.8,118.5 L364.8,128.4 L368.0,129.6 L371.7,140.7 L376.6,160.5 L379.1,164.2 L382.8,165.5 L385.3,189.0 L388.5,206.5 L391.5,160.5 L394.0,202.6 L398.2,207.5 L400.1,189.0 L403.9,151.9 L406.8,158.1 L410.0,154.3 L414.2,169.2 L416.7,175.4 L418.7,190.2 L423.6,204.0 L428.1,221.0 L431.1,210.0 L434.8,219.8 L439.7,270.4 L443.9,268.6 L449.3,235.5 L455.4,273.7 L458.5,266.4 L461.9,278.4 L464.8,263.5 L467.3,222.7 L469.8,227.7 L473.5,216.5 L478.4,226.4 L482.1,237.6 L485.9,233.4 L489.6,230.1 L492.0,233.4 L495.0,226.4 L499.5,226.4 L501.9,227.7 L504.4,235.8 L506.9,226.4 L509.3,204.2 L513.1,194.3 L515.5,179.0 L518.0,181.9 L521.7,193.8 L524.7,188.1 L527.2,191.8 L531.6,202.9 L536.5,209.6 L539.5,206.7 L543.5,199.2 L546.4,217.8 L548.9,251.2 L551.9,262.3 L555.5,292.0 L560.0,258.6 L565.0,224.0 L569.2,189.3 L573.6,169.1 L576.6,175.7 L582.3,146.1 L587.2,156.0 L591.0,170.8 L593.4,173.3 L597.6,172.5 L601.3,179.5 L605.0,188.5 L608.7,202.1 L612.4,216.5 L616.1,209.6 L619.8,226.9 L624.7,228.9 L630.9,250.4 L637.1,251.6 L639.6,255.3 L643.3,252.8 L649.5,278.3 L651.9,275.1 L654.4,255.3 L658.1,254.8 L663.1,239.2 L668.0,215.7 L671.7,212.0 L674.2,210.8 L679.1,196.0 L682.8,198.4 L685.3,214.5 L690.3,226.9 L695.2,243.0 L700.1,263.0 L706.2,257.0 L709.9,261.0 L716.1,274.5 L718.5,268.5 L722.3,282.0 L724.8,286.5 L730.9,309.1 L733.4,312.0 L736.8,324.2 L739.9,319.3 L743.0,322.0 L745.0,321.0 L747.5,327.7 L751.9,348.2 L754.9,345.0 L758.1,319.0 L760.6,317.8 L764.3,335.8 L767.3,328.9 L770.5,310.4 L773.4,323.5 L775.4,325.2 L779.6,333.9 L782.8,333.4 L786.1,324.0 L788.5,331.4 L791.5,321.5 L795.2,305.4 L797.7,301.7 L800.1,303.7 L803.9,312.8 L806.8,314.1 L810.0,304.2 L813.7,296.8 L816.2,285.6 L818.7,259.7 L820.6,190.0 L821.7,172.8 L823.8,176.0 L826.0,181.4 L828.2,190.0 L830.3,198.7 L833.6,220.4 L836.2,237.7 L839.6,226.9 L843.3,192.2 L845.5,177.1 L847.6,183.6 L849.8,186.8 L853.0,179.2 L856.3,168.4 L859.5,159.8 L861.7,158.7 L863.4,161.5 L866.5,137.7 L869.3,142.0 L872.1,143.5 L875.8,150.0 L879.0,159.8 L883.4,179.2 L885.9,183.6 L889.8,186.8" fill="none" stroke="#ea3943" stroke-width="2.4" stroke-linejoin="round" clip-path="url(#dn)"/>
<path d="M8.0,182.0 L10.0,192.0 L13.5,218.0 L19.8,292.5 L22.3,250.0 L22.7,176.6 L24.7,169.2 L26.7,166.7 L29.2,134.6 L31.6,132.0 L34.1,144.5 L35.9,154.3 L38.3,145.7 L42.0,154.3 L44.5,163.0 L45.7,176.6 L49.5,193.9 L51.9,208.7 L55.6,244.6 L60.6,233.5 L65.5,217.4 L68.0,236.0 L71.7,219.9 L74.7,242.1 L77.9,231.0 L80.4,237.2 L84.1,229.8 L86.5,192.7 L89.0,231.0 L92.7,233.5 L95.2,249.5 L98.9,230.5 L101.4,240.9 L105.0,248.3 L107.6,261.0 L111.3,262.4 L114.2,272.3 L116.2,294.5 L118.7,365.0 L122.4,353.9 L124.9,371.2 L128.6,372.4 L129.8,299.5 L131.8,185.3 L133.5,208.7 L136.0,213.7 L138.5,217.4 L141.0,304.4 L143.9,304.0 L147.1,261.0 L150.0,267.3 L153.0,274.7 L156.2,264.8 L158.7,224.8 L162.4,218.6 L165.3,222.3 L168.5,255.0 L171.0,304.4 L174.2,308.1 L177.2,297.0 L180.2,311.8 L183.4,353.9 L187.1,362.5 L189.6,355.1 L192.0,372.4 L195.7,368.7 L199.5,335.3 L201.9,330.4 L204.4,342.7 L208.1,346.4 L210.6,336.5 L213.8,350.1 L216.8,329.1 L219.7,259.9 L222.2,279.7 L224.7,280.9 L228.6,294.5 L231.6,301.9 L238.5,335.3 L241.5,339.0 L244.0,307.4 L246.9,306.9 L249.4,330.4 L252.6,330.4 L258.8,366.2 L262.5,398.4 L265.0,404.5 L268.2,381.1 L271.2,379.8 L276.1,356.3 L279.8,345.2 L283.5,306.9 L286.0,274.7 L289.7,274.7 L292.2,279.7 L295.4,270.3 L298.4,279.7 L301.3,279.7 L304.5,269.8 L307.4,266.7 L310.4,246.4 L313.6,249.3 L319.3,249.3 L322.7,218.4 L326.0,225.9 L329.2,222.1 L332.1,189.0 L334.6,169.2 L337.1,154.3 L343.3,135.8 L349.5,150.6 L353.2,146.9 L355.6,132.1 L358.6,103.7 L361.8,118.5 L364.8,128.4 L368.0,129.6 L371.7,140.7 L376.6,160.5 L379.1,164.2 L382.8,165.5 L385.3,189.0 L388.5,206.5 L391.5,160.5 L394.0,202.6 L398.2,207.5 L400.1,189.0 L403.9,151.9 L406.8,158.1 L410.0,154.3 L414.2,169.2 L416.7,175.4 L418.7,190.2 L423.6,204.0 L428.1,221.0 L431.1,210.0 L434.8,219.8 L439.7,270.4 L443.9,268.6 L449.3,235.5 L455.4,273.7 L458.5,266.4 L461.9,278.4 L464.8,263.5 L467.3,222.7 L469.8,227.7 L473.5,216.5 L478.4,226.4 L482.1,237.6 L485.9,233.4 L489.6,230.1 L492.0,233.4 L495.0,226.4 L499.5,226.4 L501.9,227.7 L504.4,235.8 L506.9,226.4 L509.3,204.2 L513.1,194.3 L515.5,179.0 L518.0,181.9 L521.7,193.8 L524.7,188.1 L527.2,191.8 L531.6,202.9 L536.5,209.6 L539.5,206.7 L543.5,199.2 L546.4,217.8 L548.9,251.2 L551.9,262.3 L555.5,292.0 L560.0,258.6 L565.0,224.0 L569.2,189.3 L573.6,169.1 L576.6,175.7 L582.3,146.1 L587.2,156.0 L591.0,170.8 L593.4,173.3 L597.6,172.5 L601.3,179.5 L605.0,188.5 L608.7,202.1 L612.4,216.5 L616.1,209.6 L619.8,226.9 L624.7,228.9 L630.9,250.4 L637.1,251.6 L639.6,255.3 L643.3,252.8 L649.5,278.3 L651.9,275.1 L654.4,255.3 L658.1,254.8 L663.1,239.2 L668.0,215.7 L671.7,212.0 L674.2,210.8 L679.1,196.0 L682.8,198.4 L685.3,214.5 L690.3,226.9 L695.2,243.0 L700.1,263.0 L706.2,257.0 L709.9,261.0 L716.1,274.5 L718.5,268.5 L722.3,282.0 L724.8,286.5 L730.9,309.1 L733.4,312.0 L736.8,324.2 L739.9,319.3 L743.0,322.0 L745.0,321.0 L747.5,327.7 L751.9,348.2 L754.9,345.0 L758.1,319.0 L760.6,317.8 L764.3,335.8 L767.3,328.9 L770.5,310.4 L773.4,323.5 L775.4,325.2 L779.6,333.9 L782.8,333.4 L786.1,324.0 L788.5,331.4 L791.5,321.5 L795.2,305.4 L797.7,301.7 L800.1,303.7 L803.9,312.8 L806.8,314.1 L810.0,304.2 L813.7,296.8 L816.2,285.6 L818.7,259.7 L820.6,190.0 L821.7,172.8 L823.8,176.0 L826.0,181.4 L828.2,190.0 L830.3,198.7 L833.6,220.4 L836.2,237.7 L839.6,226.9 L843.3,192.2 L845.5,177.1 L847.6,183.6 L849.8,186.8 L853.0,179.2 L856.3,168.4 L859.5,159.8 L861.7,158.7 L863.4,161.5 L866.5,137.7 L869.3,142.0 L872.1,143.5 L875.8,150.0 L879.0,159.8 L883.4,179.2 L885.9,183.6 L889.8,186.8" fill="none" stroke="#16c784" stroke-width="2.4" stroke-linejoin="round" clip-path="url(#up)"/>
<!-- navigator -->
<g stroke="#222531" stroke-width="1" fill="none">
<path d="M8,568 H890.5 M76.5,568 V618 M242.5,568 V618 M407.5,568 V618 M572.5,568 V618 M737.5,568 V618 M890.5,568 V618"/>
</g>
<path d="M8.0,618.4 L124.0,618.4 L130.0,617.5 L135.4,616.0 L137.4,607.2 L140.4,613.0 L149.0,614.2 L161.5,613.0 L174.0,614.7 L181.4,613.0 L196.0,613.0 L201.0,614.2 L203.8,602.7 L210.7,602.7 L214.2,573.0 L218.7,583.6 L223.7,589.3 L227.4,594.8 L231.0,594.0 L234.8,598.5 L238.6,596.5 L243.7,599.8 L248.7,599.8 L253.7,605.5 L258.6,604.7 L262.4,601.0 L267.3,602.7 L274.8,605.2 L283.5,602.7 L287.2,604.2 L291.0,603.0 L298.4,606.0 L303.4,611.0 L314.5,612.2 L319.5,613.4 L327.0,611.7 L346.9,610.4 L376.7,612.2 L381.6,611.0 L386.6,613.0 L409.0,613.4 L416.4,611.4 L428.9,610.4 L438.8,612.2 L456.2,611.7 L473.6,613.4 L483.5,614.7 L494.9,613.4 L508.6,612.2 L512.3,613.4 L539.6,614.2 L562.0,612.2 L596.8,612.7 L599.3,608.5 L603.5,597.3 L609.2,602.7 L614.2,599.8 L619.2,603.5 L626.6,603.5 L631.6,605.2 L641.5,603.5 L649.0,606.7 L657.7,609.7 L663.9,607.7 L671.4,610.4 L678.8,609.7 L686.3,611.0 L693.7,609.7 L696.2,606.5 L703.7,607.2 L709.9,608.5 L716.0,603.5 L723.5,602.7 L727.5,599.8 L731.2,602.2 L734.9,605.2 L739.9,603.5 L743.6,605.2 L746.1,604.2 L757.3,609.0 L769.7,611.0 L789.6,611.0 L799.5,609.7 L819.4,611.7 L829.3,609.7 L836.8,611.0 L854.2,610.4 L865.4,612.7 L879.0,612.7 L890.2,613.4 L890.2,618.4 L8,618.4 Z" fill="#2a3260" fill-opacity="0.6"/>
<path d="M8.0,618.4 L124.0,618.4 L130.0,617.5 L135.4,616.0 L137.4,607.2 L140.4,613.0 L149.0,614.2 L161.5,613.0 L174.0,614.7 L181.4,613.0 L196.0,613.0 L201.0,614.2 L203.8,602.7 L210.7,602.7 L214.2,573.0 L218.7,583.6 L223.7,589.3 L227.4,594.8 L231.0,594.0 L234.8,598.5 L238.6,596.5 L243.7,599.8 L248.7,599.8 L253.7,605.5 L258.6,604.7 L262.4,601.0 L267.3,602.7 L274.8,605.2 L283.5,602.7 L287.2,604.2 L291.0,603.0 L298.4,606.0 L303.4,611.0 L314.5,612.2 L319.5,613.4 L327.0,611.7 L346.9,610.4 L376.7,612.2 L381.6,611.0 L386.6,613.0 L409.0,613.4 L416.4,611.4 L428.9,610.4 L438.8,612.2 L456.2,611.7 L473.6,613.4 L483.5,614.7 L494.9,613.4 L508.6,612.2 L512.3,613.4 L539.6,614.2 L562.0,612.2 L596.8,612.7 L599.3,608.5 L603.5,597.3 L609.2,602.7 L614.2,599.8 L619.2,603.5 L626.6,603.5 L631.6,605.2 L641.5,603.5 L649.0,606.7 L657.7,609.7 L663.9,607.7 L671.4,610.4 L678.8,609.7 L686.3,611.0 L693.7,609.7 L696.2,606.5 L703.7,607.2 L709.9,608.5 L716.0,603.5 L723.5,602.7 L727.5,599.8 L731.2,602.2 L734.9,605.2 L739.9,603.5 L743.6,605.2 L746.1,604.2 L757.3,609.0 L769.7,611.0 L789.6,611.0 L799.5,609.7 L819.4,611.7 L829.3,609.7 L836.8,611.0 L854.2,610.4 L865.4,612.7 L879.0,612.7 L890.2,613.4" fill="none" stroke="#4a6cf7" stroke-width="1.3" stroke-linejoin="round"/>
<rect x="880.3" y="581" width="17.5" height="25" rx="8.75" fill="#262a36"/>
<path d="M887.3,588 V597.5 M891.3,588 V597.5" stroke="#a1a7bb" stroke-width="1.3"/>
<!-- watermark logo -->
<g transform="translate(711.6,439.8)" fill="none" stroke="#dfe3ea" stroke-width="2.7" stroke-linecap="round" stroke-linejoin="round">
<path d="M9.4,9.4 A13.3,13.3 0 1 1 12.9,3.2 Q12,6.5 9,5 Q8,4.5 7.2,2 L5.8,-3.5 Q5,-6 3.8,-3.5 L0.6,3.5 Q-0.3,5.5 -0.9,3 L-1.8,-3.8 Q-2.4,-6.5 -3.6,-4 L-9,6.5"/>
</g>
</svg>

<!-- top controls -->
<div class="pill" style="left:8px;top:10px;width:148px;height:40px"></div>
<div class="act" style="left:11px;top:13px;width:58px;height:33.5px;background:#0d1421"></div>
<div class="bt" style="left:21.5px;top:21px;color:#fff">Price</div>
<div class="bt" style="left:82px;top:21px;color:#a1a7bb">Mkt Cap</div>

<div class="pill" style="left:166px;top:10px;width:187px;height:40px"></div>
<div class="act" style="left:169.5px;top:13px;width:43px;height:33.5px;background:#222531"></div>
<svg class="abs" style="left:178px;top:19px" width="22" height="22" viewBox="0 0 22 22" fill="none" stroke="#fff" stroke-width="1.8" stroke-linecap="round">
<path d="M2.3,4.7 V16.8 H17.8"/><path d="M5.1,13.5 C8.5,12.8 9.5,10 10.5,8.5 C12,6 13.5,4.3 16,4.3 C17,4.3 17.6,4.8 17.8,5.3"/></svg>
<svg class="abs" style="left:226px;top:20px" width="20" height="20" viewBox="0 0 20 20" fill="none" stroke="#a1a7bb" stroke-width="1.6">
<path d="M5.6,2.5 V16.9 M14,2.5 V16.9"/><rect x="3.6" y="9.3" width="4" height="4.8" rx="1.2" fill="#323546"/><rect x="12" y="5.7" width="4" height="8.8" rx="1.2" fill="#323546"/></svg>
<div class="bt" style="left:251px;top:21px;color:#a1a7bb">TradingView</div>

<div class="pill" style="left:557px;top:10px;width:110px;height:40px;background:#323546"></div>
<div class="abs" style="left:567px;top:20.5px;font-size:15.7px;line-height:16px;color:#616e85">Compare</div>
<svg class="abs" style="left:640px;top:22px" width="14" height="14" viewBox="0 0 14 14" fill="none" stroke="#a1a7bb" stroke-width="1.6" stroke-linecap="round"><path d="M2.5,5 L7,9.5 L11.5,5"/></svg>

<div class="pill" style="left:677px;top:10px;width:322px;height:40px"></div>
<div class="act" style="left:680.5px;top:13px;width:49px;height:33.5px;background:#0d1421"></div>
<div class="bt" style="left:691px;top:21px;color:#fff;letter-spacing:0.9px">24h</div>
<div class="bt" style="left:741px;top:21px;color:#a1a7bb">1W</div>
<div class="bt" style="left:786px;top:21px;color:#a1a7bb">1M</div>
<div class="bt" style="left:829px;top:21px;color:#a1a7bb">1Y</div>
<div class="bt" style="left:870px;top:21px;color:#a1a7bb">All</div>
<div class="abs" style="left:900px;top:20px;width:2px;height:20px;background:#4a4f63"></div>
<div class="bt" style="left:913px;top:21px;color:#a1a7bb">Log</div>
<div class="abs" style="left:952px;top:20px;width:2px;height:20px;background:#4a4f63"></div>
<svg class="abs" style="left:967px;top:20px" width="20" height="20" viewBox="0 0 20 20" fill="none" stroke="#a1a7bb" stroke-width="1.5">
<path d="M2,5 H17 M2,10 H17 M2,15 H17"/>
<circle cx="12" cy="5" r="1.9" fill="#323546"/><circle cx="7" cy="10" r="1.9" fill="#323546"/><circle cx="12" cy="15" r="1.9" fill="#323546"/></svg>

<!-- axis labels -->
<div class="ax" style="top:109.0px;left:898.5px">0.0<sub>5</sub>8025</div><div class="ax" style="top:154.8px;left:898.5px">0.0<sub>5</sub>8</div><div class="ax" style="top:200.4px;left:898.5px">0.0<sub>5</sub>7975</div><div class="ax" style="top:246.2px;left:898.5px">0.0<sub>5</sub>795</div><div class="ax" style="top:291.5px;left:898.5px">0.0<sub>5</sub>7925</div><div class="ax" style="top:336.6px;left:898.5px">0.0<sub>5</sub>79</div><div class="ax" style="top:382.5px;left:898.5px">0.0<sub>5</sub>7875</div><div class="ax" style="top:427.9px;left:898.5px">0.0<sub>5</sub>785</div>
<div class="abs" style="left:891px;top:170px;width:77px;height:37px;background:#16c784;border-radius:3px"></div>
<div class="ax" style="left:898px;top:177px;color:#fff;font-weight:bold;-webkit-text-stroke:0">0.0<sub>5</sub>7987</div>

<div class="abs" style="left:11px;top:177px;width:71px;height:32px;background:rgba(38,41,54,0.92);border-radius:6px"></div>
<div class="ax" style="left:16px;top:182px;font-weight:bold;color:#a1a7bb;-webkit-text-stroke:0">0.0<sub>5</sub>7985</div>

<div class="bt" style="left:944px;top:487px;color:#a1a7bb;font-size:14px;letter-spacing:0.3px">USD</div>

<div class="tl" style="left:9px">6:00 PM</div>
<div class="tl" style="left:90px">9:00 PM</div>
<div class="tl" style="left:207px">2 Dec</div>
<div class="tl" style="left:308px">3:00 AM</div>
<div class="tl" style="left:416px">6:00 AM</div>
<div class="tl" style="left:525px">9:00 AM</div>
<div class="tl" style="left:631px">12:00 PM</div>
<div class="tl" style="left:744px">3:00 PM</div>
<div class="tl" style="left:852px">6:00 PM</div>

<!-- watermark text -->
<div class="abs" style="left:736px;top:431px;font-size:19.5px;line-height:20px;color:#dfe3ea;-webkit-text-stroke:0.5px #dfe3ea;letter-spacing:0.1px">CoinMarketCap</div>

<!-- history badge -->
<svg class="abs" style="left:8px;top:531px" width="50" height="32" viewBox="0 0 50 32">
<path d="M16,0 H33 A15.5,15.5 0 0 1 33,31 H16 Q12.5,31 10.5,28.5 L0,15.5 L10.5,2.5 Q12.5,0 16,0 Z" fill="#5f647a"/>
<g fill="none" stroke="#fff" stroke-width="1.7" stroke-linecap="round"><path d="M13.9,13.4 A6.3,6.3 0 1 1 13.8,17.2"/><path d="M19.9,11.6 V15.9 L22.6,18.2"/></g>
<path d="M11.3,12.3 L15.8,12.2 L13.4,16 Z" fill="#fff"/>
</svg>
<div class="bt" style="left:40.5px;top:538px;color:#fff;font-size:14.5px">7</div>

<!-- analyze -->
<svg class="abs" style="left:782px;top:527px" width="108" height="37" viewBox="0 0 108 37">
<path d="M53,0.5 L58,6 H92 A14.6,14.6 0 0 1 92,35.3 H15 A14.6,14.6 0 0 1 15,6 H48 Z" fill="#3861fb"/>
<g fill="none" stroke="#fff" stroke-width="1.6" stroke-linecap="round" stroke-linejoin="round">
<path d="M12.3,25.8 A7.2,7.2 0 1 1 18.5,28.4 L10.6,28.8 Z"/>
<path d="M12.6,24.2 L15.6,18.6 Q16.4,17.3 17,18.8 L18.3,22.8 Q18.9,24.2 19.6,22.8 L21,19.5 Q21.6,18.3 22.2,19.7 L22.9,22.5 Q23.6,24.3 25,23.3"/>
</g>
<path d="M88.8,17.4 L93,21.8 L88.8,26.2" fill="none" stroke="#fff" stroke-width="1.5" stroke-linecap="round" stroke-linejoin="round"/>
</svg>
<div class="bt" style="left:812.5px;top:539px;color:#fff;font-size:14px;letter-spacing:0.2px">Analyze</div>

<div class="yr" style="left:62px">2021</div>
<div class="yr" style="left:227px">2022</div>
<div class="yr" style="left:392px">2023</div>
<div class="yr" style="left:557px">2024</div>
<div class="yr" style="left:723px">2025</div>
</body></html>
